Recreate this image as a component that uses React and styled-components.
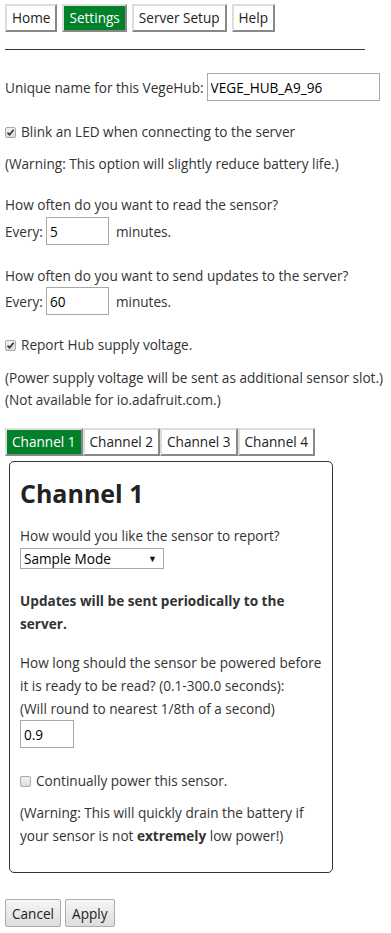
import React from "react";
import styled, { createGlobalStyle, css } from "styled-components";

const Global = createGlobalStyle`
  html, body { margin: 0; padding: 0; background: #fff; }
  body {
    font-family: "Open Sans", "Noto Sans", sans-serif;
    font-size: 13.6px;
    color: #333;
  }
`;

const Page = styled.div`
  padding: 4px 5px 6px 5px;
  box-sizing: border-box;
`;

const NavBar = styled.nav`
  display: flex;
  gap: 5px;
`;

const TabButton = styled.button`
  font: inherit;
  height: 28px;
  padding: 0 5px;
  border: 2px solid;
  border-color: #ddd #888 #888 #ddd;
  background: #fff;
  color: #222;
  cursor: pointer;
  line-height: 24px;
  ${(p) =>
    p.$active &&
    css`
      background: #00812a;
      color: #fff;
    `}
`;

const Rule = styled.hr`
  width: 360px;
  margin: 17px 0 0 0;
  border: 0;
  border-top: 1px solid #333;
`;

const Row = styled.div`
  display: flex;
  align-items: center;
  gap: ${(p) => p.$gap || "4px"};
  margin-top: ${(p) => p.$mt || "0px"};
  white-space: nowrap;
`;

const Para = styled.p`
  margin: ${(p) => p.$mt || "0px"} 0 0 0;
  line-height: ${(p) => p.$lh || "22px"};
  font-weight: ${(p) => (p.$bold ? 700 : 400)};
`;

const Strong = styled.strong`
  font-weight: 700;
`;

const TextInput = styled.input`
  font: inherit;
  color: #000;
  width: ${(p) => p.$w};
  height: 28px;
  box-sizing: border-box;
  border: 1px solid #a9a9a9;
  padding: 0 3px;
  margin: 0;
  outline: none;
`;

const Suffix = styled.span`
  margin-left: 4px;
`;

const CheckBox = styled.span`
  display: inline-flex;
  align-items: center;
  justify-content: center;
  width: 11px;
  height: 11px;
  border: 1px solid #a8a8a8;
  border-radius: 2px;
  background: linear-gradient(#f2f2f2, #dcdcdc);
  box-sizing: border-box;
  flex: none;
`;

const CheckLabel = styled.label`
  display: flex;
  align-items: center;
  gap: 5px;
  margin-top: ${(p) => p.$mt || "0px"};
  line-height: 22px;
`;

const ChannelTabs = styled.div`
  display: flex;
  margin-top: 17px;
`;

const Panel = styled.section`
  margin: 5px 0 0 4px;
  width: 324px;
  box-sizing: border-box;
  border: 1px solid #333;
  border-radius: 5px;
  padding: 14px 4px 25px 10px;
`;

const Heading = styled.h1`
  margin: 0;
  font-size: 25px;
  font-weight: 700;
  line-height: 34px;
  color: #222;
`;

const SelectBox = styled.div`
  display: flex;
  align-items: center;
  justify-content: space-between;
  width: 144px;
  height: 21px;
  box-sizing: border-box;
  border: 1px solid #a9a9a9;
  padding: 0 6px 0 3px;
  color: #000;
  margin-top: 1px;
`;

const Arrow = styled.span`
  font-size: 9px;
  color: #111;
`;

const Actions = styled.div`
  display: flex;
  gap: 4px;
  margin-top: 26px;
`;

const ActionButton = styled.button`
  font: inherit;
  height: 28px;
  padding: 0 6px;
  border: 1px solid #adadad;
  border-radius: 2px;
  background: linear-gradient(#f6f6f6, #dddddd);
  color: #222;
`;

function Check({ checked }) {
  return (
    <CheckBox>
      {checked && (
        <svg width="9" height="9" viewBox="0 0 9 9">
          <path d="M1.5 4.6 L3.6 6.8 L7.6 1.8" fill="none" stroke="#333" strokeWidth="1.6" />
        </svg>
      )}
    </CheckBox>
  );
}

export default function App() {
  return (
    <Page>
      <Global />
      <NavBar>
        <TabButton>Home</TabButton>
        <TabButton $active>Settings</TabButton>
        <TabButton>Server Setup</TabButton>
        <TabButton>Help</TabButton>
      </NavBar>
      <Rule />
      <Row $mt="23px" $gap="3px">
        <span>Unique name for this VegeHub:</span>
        <TextInput $w="173px" defaultValue="VEGE_HUB_A9_96" />
      </Row>
      <CheckLabel $mt="20px">
        <Check checked />
        <span>Blink an LED when connecting to the server</span>
      </CheckLabel>
      <Para $mt="10px">(Warning: This option will slightly reduce battery life.)</Para>
      <Para $mt="19px">How often do you want to read the sensor?</Para>
      <Row $mt="1px" $gap="3px">
        <span>Every:</span>
        <TextInput $w="63px" defaultValue="5" />
        <Suffix>minutes.</Suffix>
      </Row>
      <Para $mt="20px">How often do you want to send updates to the server?</Para>
      <Row $mt="0px" $gap="3px">
        <span>Every:</span>
        <TextInput $w="63px" defaultValue="60" />
        <Suffix>minutes.</Suffix>
      </Row>
      <CheckLabel $mt="19px">
        <Check checked />
        <span>Report Hub supply voltage.</span>
      </CheckLabel>
      <Para $mt="11px">(Power supply voltage will be sent as additional sensor slot.)</Para>
      <Para>(Not available for io.adafruit.com.)</Para>
      <ChannelTabs>
        <TabButton $active>Channel 1</TabButton>
        <TabButton>Channel 2</TabButton>
        <TabButton>Channel 3</TabButton>
        <TabButton>Channel 4</TabButton>
      </ChannelTabs>
      <Panel>
        <Heading>Channel 1</Heading>
        <Para $mt="15px">How would you like the sensor to report?</Para>
        <SelectBox>
          <span>Sample Mode</span>
          <Arrow>▼</Arrow>
        </SelectBox>
        <Para $mt="20px" $lh="23px" $bold>
          Updates will be sent periodically to the server.
        </Para>
        <Para $mt="16px" $lh="23px">
          How long should the sensor be powered before it is ready to be read? (0.1-300.0 seconds):
          <br />
          (Will round to nearest 1/8th of a second)
        </Para>
        <TextInput $w="54px" defaultValue="0.9" />
        <CheckLabel $mt="22px">
          <Check />
          <span>Continually power this sensor.</span>
        </CheckLabel>
        <Para $mt="9px" $lh="23px">
          (Warning: This will quickly drain the battery if your sensor is not <Strong>extremely</Strong> low power!)
        </Para>
      </Panel>
      <Actions>
        <ActionButton>Cancel</ActionButton>
        <ActionButton>Apply</ActionButton>
      </Actions>
    </Page>
  );
}
